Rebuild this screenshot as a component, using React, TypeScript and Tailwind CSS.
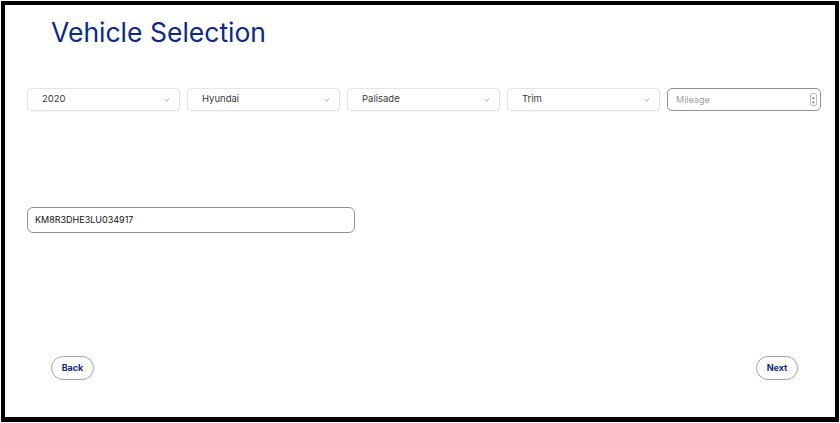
import { ChevronDown } from 'lucide-react'

const SELECTS = ['2020', 'Hyundai', 'Palisade', 'Trim']

function FakeSelect({ label }: { label: string }) {
  return (
    <div className="flex h-[23px] w-[153px] items-center justify-between rounded-[4px] border border-[#e3e4e8] bg-white pl-[14px] pr-[8px] shadow-[0_1px_1px_rgba(0,0,0,0.04)]">
      <span className="text-[9.5px] text-[#3a3a3a]">{label}</span>
      <ChevronDown className="h-[8px] w-[8px] text-[#9aa0aa]" strokeWidth={2} />
    </div>
  )
}

export default function App() {
  return (
    <div className="h-[423px] w-[840px] bg-white pl-px pt-px font-['Inter',sans-serif]">
      <div className="flex h-[421px] w-[838px] flex-col border-x-4 border-t-4 border-b-[5px] border-black bg-white">
        <h1 className="ml-[46px] mt-[10px] text-[26.5px] leading-[34px] text-[#0c2a8a]">Vehicle Selection</h1>

        {/* selects row */}
        <div className="ml-[22px] mt-[39px] flex gap-[7px]">
          {SELECTS.map(s => <FakeSelect key={s} label={s} />)}
          <div className="flex h-[23px] w-[154px] items-center justify-between rounded-[5px] border border-[#8f9299] bg-white pl-[8px] pr-[3px]">
            <span className="text-[9px] text-[#9aa0aa]">Mileage</span>
            <div className="flex h-[13px] w-[7px] flex-col items-center justify-center rounded-[2px] border border-[#b8bcc4] text-[5px] leading-[5px] text-[#777]">
              <span>▴</span><span>▾</span>
            </div>
          </div>
        </div>

        {/* vin */}
        <div className="ml-[22px] mt-[96px] flex h-[26px] w-[328px] items-center rounded-[6px] border border-[#8f9299] px-[7px]">
          <span className="text-[9px] text-[#111]">KM8R3DHE3LU034917</span>
        </div>

        <div className="mt-auto mb-[37px] flex justify-between pl-[46px] pr-[37px]">
          <button className="h-[24px] w-[43px] rounded-full border border-[#9ea3ab] text-[9px] font-bold text-[#0c2a8a]">Back</button>
          <button className="h-[24px] w-[42px] rounded-full border border-[#9ea3ab] text-[9px] font-bold text-[#0c2a8a]">Next</button>
        </div>
      </div>
    </div>
  )
}
